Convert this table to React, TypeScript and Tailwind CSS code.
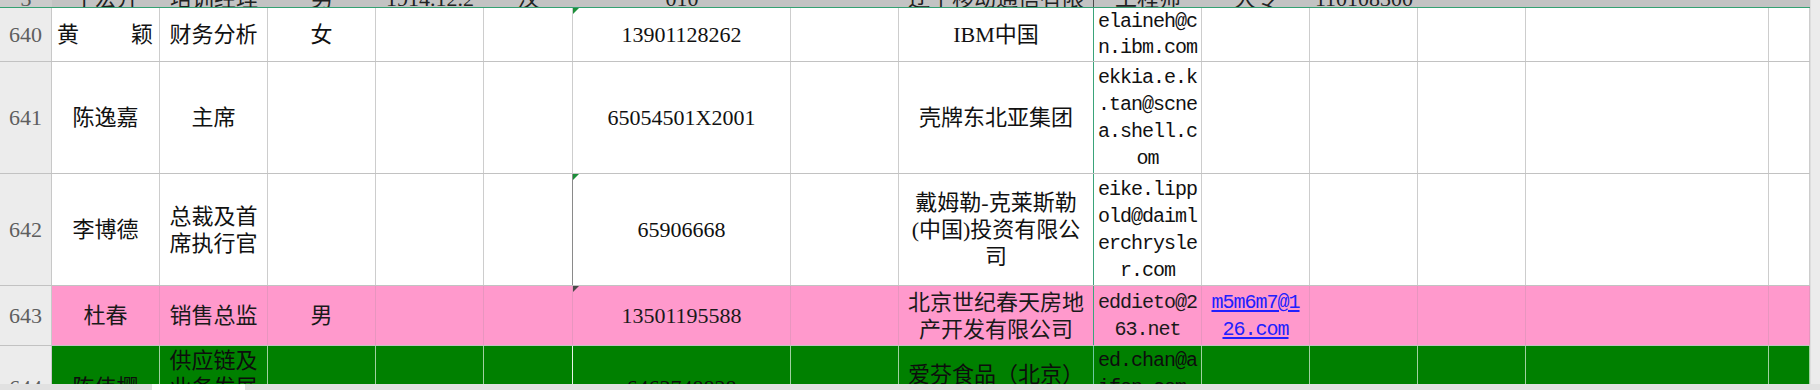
import React from "react";

const COLS =
  "grid grid-rows-1 grid-cols-[52px_108px_108px_108px_108px_89px_218px_108px_195px_108px_108px_108px_108px_243px_41px]";
const SERIF = "font-['Liberation_Serif','Noto_Sans_CJK_SC',serif]";
const MONO = "font-['Liberation_Mono','Noto_Sans_CJK_SC',monospace]";

type CellDef = { c?: React.ReactNode; cls?: string; tri?: string };

function Lines({
  lines,
  mono,
  cls = "",
  lead = "leading-[27px]",
}: {
  lines: string[];
  mono?: boolean;
  cls?: string;
  lead?: string;
}) {
  return (
    <div
      className={`${
        mono ? `${MONO} text-[20px] tracking-[-1px]` : `${SERIF} text-[22px]`
      } ${lead} ${cls}`}
    >
      {lines.map((l, i) => (
        <div key={i} className="whitespace-nowrap">
          {l}
        </div>
      ))}
    </div>
  );
}

function Row({
  h,
  bg,
  line,
  text,
  hdr,
  cells,
}: {
  h: string;
  bg: string;
  line: string;
  text: string;
  hdr: string;
  cells: CellDef[];
}) {
  return (
    <div className={`${COLS} ${h} shrink-0 border-b border-[#c2c2c2]`}>
      <div
        className={`min-h-0 overflow-hidden flex items-center justify-center bg-[#ececec] border-r border-[#c8c8c8] ${SERIF} text-[22px] leading-[27px] text-[#5e5e5e]`}
      >
        {hdr}
      </div>
      {cells.map((d, i) => (
        <div
          key={i}
          className={`relative min-h-0 overflow-hidden flex items-center justify-center text-center border-r ${bg} ${line} ${text} ${
            d.cls ?? ""
          } ${SERIF} text-[22px] leading-[27px]`}
        >
          {d.tri && (
            <span
              className={`absolute left-0 top-0 w-0 h-0 border-t-[6px] border-r-[6px] border-r-transparent ${d.tri}`}
            />
          )}
          {d.c}
        </div>
      ))}
    </div>
  );
}

const TOP = [
  "3",
  "于宏升",
  "培训经理",
  "男",
  "1914.12.2",
  "汉",
  "010",
  "",
  "辽宁移动通信有限",
  "工程师",
  "大专",
  "110108300",
  "",
  "",
  "",
];

const GREEN_TRI = "border-t-[#1d8f3a]";
const H_LINE = "border-r-[#3aa37a]";

export default function App() {
  const e = (n: number): CellDef[] => Array.from({ length: n }, () => ({}));
  return (
    <div className="w-[1820px] h-[390px] overflow-hidden bg-white flex flex-col">
      <div className="flex h-[384px] overflow-hidden">
        <div className="w-[1810px] flex flex-col overflow-hidden">
          {/* frozen top row, mostly cut off */}
          <div
            className={`${COLS} h-[8px] shrink-0 overflow-hidden bg-[#c3c3c3] border-b border-[#35a172]`}
          >
            {TOP.map((t, i) => (
              <div
                key={i}
                className={`min-h-0 flex items-end justify-center overflow-hidden ${
                  i === 8 ? "border-r border-[#4a4a4a]" : ""
                } ${i === 0 ? "bg-[#cbcbcb]" : ""}`}
              >
                <div
                  className={`${SERIF} text-[22px] leading-[27px] mb-[-5px] whitespace-nowrap ${
                    i === 0 ? "text-[#555]" : "text-[#222]"
                  }`}
                >
                  {t}
                </div>
              </div>
            ))}
          </div>

          <Row
            h="h-[54px]"
            bg="bg-white"
            line="border-[#cdcdcd]"
            text="text-[#111]"
            hdr="640"
            cells={[
              {
                c: (
                  <div className="w-full flex justify-between pl-[5px] pr-[6px]">
                    <span>黄</span>
                    <span>颖</span>
                  </div>
                ),
              },
              { c: "财务分析" },
              { c: "女" },
              {},
              {},
              { c: "13901128262", tri: GREEN_TRI },
              {},
              { c: "IBM中国", cls: H_LINE },
              {
                c: (
                  <Lines
                    mono
                    lead="leading-[26px]"
                    lines={["elaineh@c", "n.ibm.com"]}
                  />
                ),
              },
              ...e(5),
            ]}
          />

          <Row
            h="h-[112px]"
            bg="bg-white"
            line="border-[#cdcdcd]"
            text="text-[#111]"
            hdr="641"
            cells={[
              { c: "陈逸嘉" },
              { c: "主席" },
              {},
              {},
              {},
              { c: "65054501X2001" },
              {},
              { c: "壳牌东北亚集团", cls: H_LINE },
              {
                c: (
                  <Lines
                    mono
                    lines={["ekkia.e.k", ".tan@scne", "a.shell.c", "om"]}
                  />
                ),
              },
              ...e(5),
            ]}
          />

          <Row
            h="h-[112px]"
            bg="bg-white"
            line="border-[#cdcdcd]"
            text="text-[#111]"
            hdr="642"
            cells={[
              { c: "李博德" },
              { c: <Lines lines={["总裁及首", "席执行官"]} /> },
              {},
              {},
              { cls: "border-r-[#8a8a8a]" },
              { c: "65906668", tri: GREEN_TRI },
              {},
              {
                c: <Lines lines={["戴姆勒-克莱斯勒", "(中国)投资有限公", "司"]} />,
                cls: H_LINE,
              },
              {
                c: (
                  <Lines
                    mono
                    lines={["eike.lipp", "old@daiml", "erchrysle", "r.com"]}
                  />
                ),
              },
              ...e(5),
            ]}
          />

          <Row
            h="h-[60px]"
            bg="bg-[#ff99cc]"
            line="border-[#e895bf]"
            text="text-[#1a1a1a]"
            hdr="643"
            cells={[
              { c: "杜春" },
              { c: "销售总监" },
              { c: "男" },
              {},
              {},
              { c: "13501195588", tri: "border-t-[#4a4a4a]" },
              {},
              {
                c: <Lines lines={["北京世纪春天房地", "产开发有限公司"]} />,
                cls: H_LINE,
              },
              { c: <Lines mono lines={["eddieto@2", "63.net"]} /> },
              {
                c: (
                  <Lines
                    mono
                    cls="text-[#2020ff] underline underline-offset-2"
                    lines={["m5m6m7@1", "26.com"]}
                  />
                ),
              },
              ...e(4),
            ]}
          />

          <Row
            h="h-[84px]"
            bg="bg-[#008000]"
            line="border-[#9fd09f]"
            text="text-[#0d0d0d]"
            hdr="644"
            cells={[
              { c: "陈伟樱" },
              { c: <Lines lines={["供应链及", "业务发展", "总监"]} /> },
              {},
              {},
              { cls: "border-r-[#e8f4e8]" },
              { c: "6463748828" },
              {},
              {
                c: <Lines lines={["爱芬食品（北京）", "有限公司"]} />,
                cls: "border-r-[#6cc9a0]",
              },
              { c: <Lines mono lines={["ed.chan@a", "ifen.com.", "cn"]} /> },
              ...e(5),
            ]}
          />
        </div>
        <div className="w-[10px] bg-[#ececec] border-l border-[#dedede]" />
      </div>
      <div className="h-[6px] flex bg-[#e1e1e1]">
        <div className="w-[152px]" />
        <div className="w-[93px] bg-white" />
      </div>
    </div>
  );
}
